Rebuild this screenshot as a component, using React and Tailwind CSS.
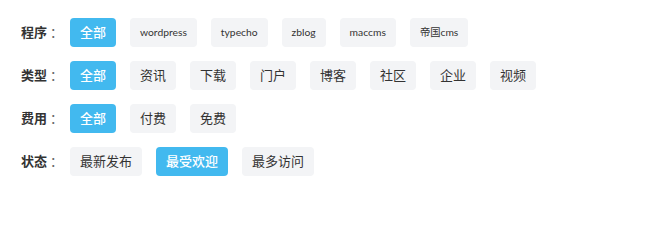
import React, { useState } from 'react';

// filter groups shown on the page
const groups = [
    { label: '程序', items: ['全部', 'wordpress', 'typecho', 'zblog', 'maccms', '帝国cms'], active: 0, small: true },
    { label: '类型', items: ['全部', '资讯', '下载', '门户', '博客', '社区', '企业', '视频'], active: 0 },
    { label: '费用', items: ['全部', '付费', '免费'], active: 0 },
    { label: '状态', items: ['最新发布', '最受欢迎', '最多访问'], active: 1 },
];

const FilterRow = ({ group }) => {
    const [active, setActive] = useState(group.active);

    return (
        <div className="flex items-center mb-[14px]">
            {/* Row label */}
            <div className="w-[49px] shrink-0 text-[13px] font-bold text-[#333]">
                {group.label}
                <span className="ml-[3px] font-normal text-[#666]">：</span>
            </div>

            {/* Options */}
            <div className="flex items-center gap-[14px]">
                {group.items.map((item, i) => (
                    <button
                        key={item}
                        onClick={() => setActive(i)}
                        className={
                            i === active
                                ? 'h-[29px] px-[10px] rounded-[4px] bg-[#42b9ef] text-white text-[13px] font-medium leading-[29px]'
                                : group.small && i !== 0
                                    ? 'h-[29px] px-[10px] rounded-[4px] bg-[#f3f4f6] text-[#333] text-[10.3px] leading-[29px]'
                                    : 'h-[29px] px-[10px] rounded-[4px] bg-[#f3f4f6] text-[#333] text-[13px] leading-[29px]'
                        }
                    >
                        {item}
                    </button>
                ))}
            </div>
        </div>
    );
};

const App = () => {
    return (
        <div className="min-h-[202px] bg-white pt-[18px] pl-[21px] font-['Lato','Noto_Sans_CJK_SC',sans-serif]">
            {groups.map((g) => (
                <FilterRow key={g.label} group={g} />
            ))}
        </div>
    );
};

export default App;
